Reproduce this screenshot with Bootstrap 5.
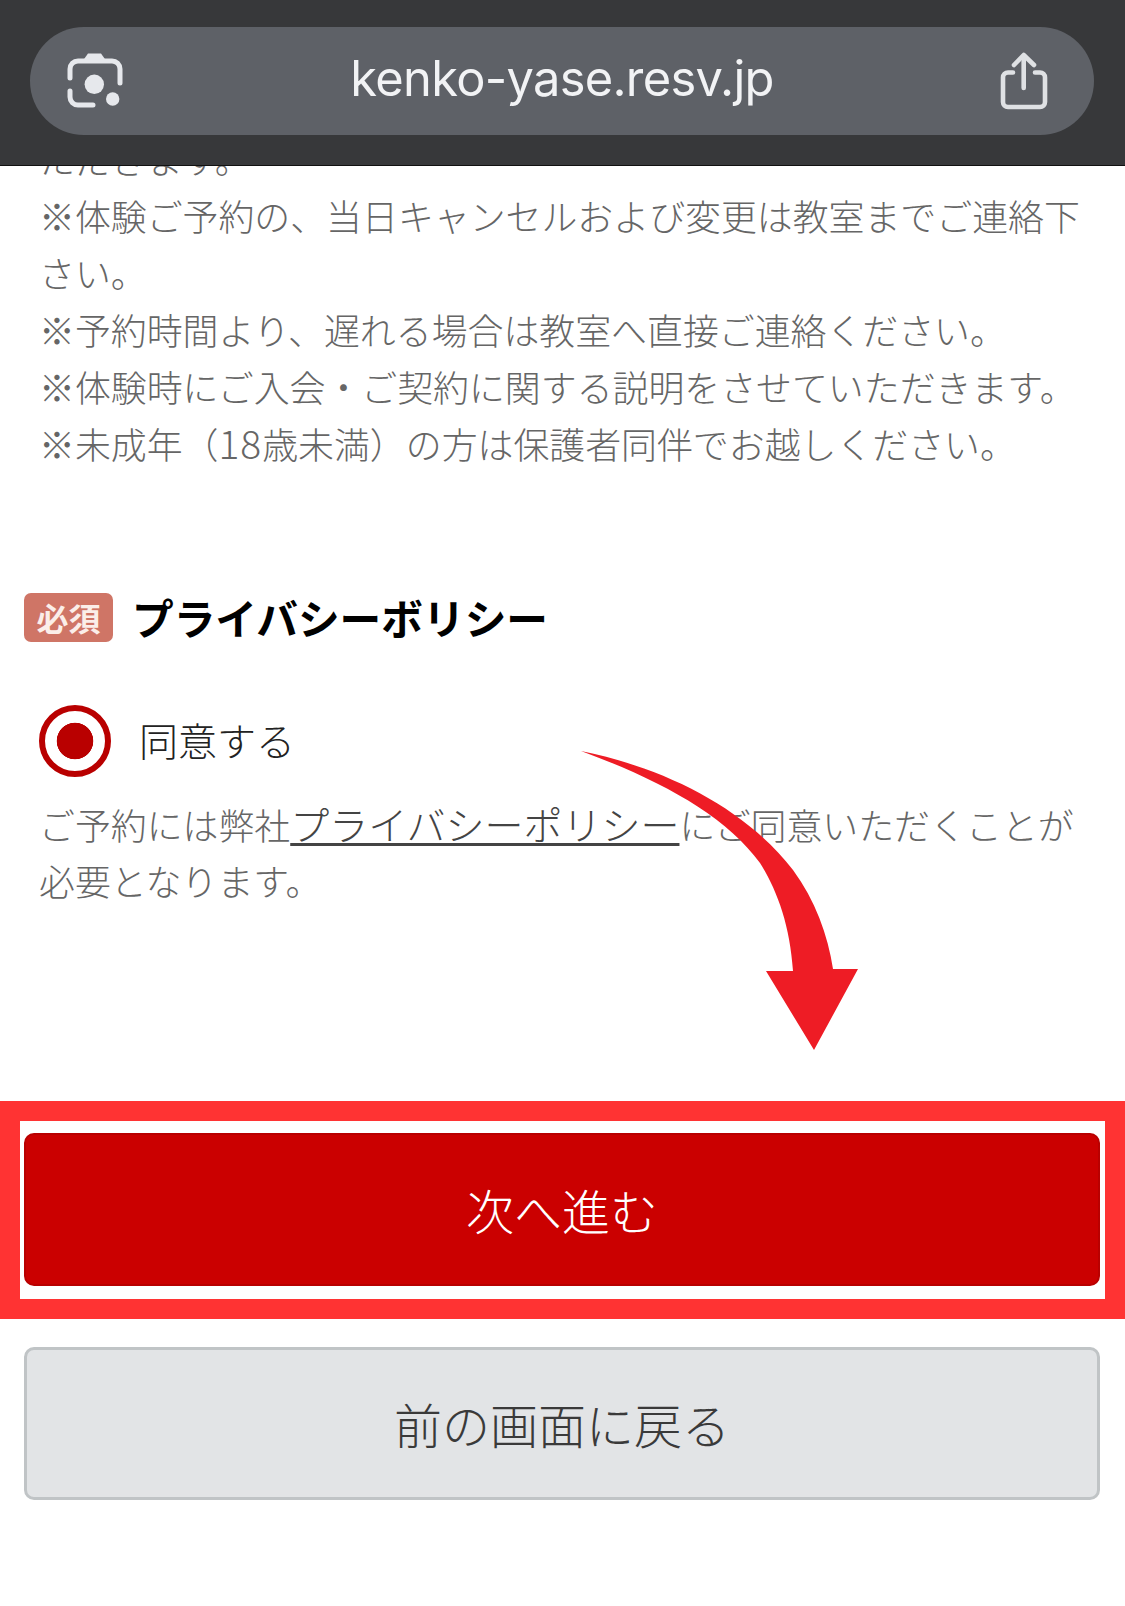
<!DOCTYPE html>
<html lang="ja">
<head>
<meta charset="utf-8">
<title>kenko-yase.resv.jp</title>
<link rel="stylesheet" href="https://cdn.jsdelivr.net/npm/bootstrap@5.3.0/dist/css/bootstrap.min.css">
<style>
html,body{background:#fff;}
body{width:1125px;height:1606px;overflow:hidden;font-family:"Noto Sans CJK JP","Liberation Sans",sans-serif;font-weight:300;position:relative;}
.top-chrome{height:166px;background:#37383a;border-bottom:1px solid #111;padding:27px 31px 0 30px;}
.url-pill{height:108px;background:#5e6167;border-radius:54px;padding:0 43px 0 29px;}
.url-text{font-family:Inter,"Liberation Sans",sans-serif;font-weight:400;font-size:48.8px;letter-spacing:-.7px;color:#f2f3f5;line-height:1;}
.page-main{padding-top:129.5px;}
.notes{padding:0 43px 0 39px;font-size:35.9px;line-height:57.1px;color:#666;}
.notes p{margin:0;}
.num-wide{font-size:39px;letter-spacing:1px;line-height:1;}
.title-row{margin:120.9px 0 0 24px;}
.req-tag{width:89px;height:49px;background:#cf7566;color:#fbeee9;font-size:32px;font-weight:700;border-radius:7px;line-height:1;}
.title-text{font-size:41.7px;font-weight:700;color:#000;margin-left:19px;line-height:1;}
.agree-row{margin:63px 0 0 39px;}
.agree-row .form-check-input.rad-mark{width:72px;height:72px;margin:0;flex:none;border:6.5px solid #b90000;background:radial-gradient(circle,#b90000 18px,#fff 18.6px);box-shadow:none;}
.agree-label{font-size:39px;color:#222;margin:-2px 0 0 28px;line-height:1;}
.consent{padding:19px 43px 0 39px;font-size:35.9px;line-height:56.5px;color:#666;margin:0;}
.consent a{font-size:39px;color:#444;line-height:1;text-decoration:underline;text-decoration-thickness:3px;text-underline-offset:3px;text-decoration-skip-ink:none;}
.callout{margin-top:192px;border:20px solid #f33;padding:12px 5px 13px 4px;background:#fff;}
.go-btn{height:153px;background:#cb0000;border:2px solid #b90000;border-radius:10px;color:#fff;font-size:48px;font-weight:300;}
.back-wrap{padding:28px 25px 0 24px;}
.back-btn{height:153px;background:#e2e4e6;border:3px solid #c0c4c6;border-radius:10px;color:#3a3a3a;font-size:48px;font-weight:300;}
.swoop{position:absolute;left:570px;top:740px;width:300px;height:320px;pointer-events:none;}
</style>
</head>
<body>
<header class="top-chrome fixed-top">
  <div class="url-pill d-flex align-items-center">
    <svg width="70" height="70" viewBox="60 46 70 70" aria-hidden="true">
      <g fill="none" stroke="#e6e8ec" stroke-width="5" stroke-linecap="round">
        <path d="M71 78V69a8 8 0 0 1 8-8H113a8 8 0 0 1 8 8V83"/>
        <path d="M71 91V97a8 8 0 0 0 8 8H94"/>
      </g>
      <g fill="#e6e8ec">
        <path d="M83 62L89 53.5H102L108 62Z"/>
        <circle cx="95.3" cy="84.3" r="9.7"/>
        <circle cx="113.7" cy="99" r="6.7"/>
      </g>
    </svg>
    <div class="url-text flex-grow-1 text-center mb-1">kenko-yase.resv.jp</div>
    <svg width="56" height="64" viewBox="996 49 56 64" aria-hidden="true">
      <g fill="none" stroke="#dfe1e4" stroke-width="4.6" stroke-linecap="round" stroke-linejoin="round">
        <path d="M1014 72.5H1009a5 5 0 0 0-5 5V102a5 5 0 0 0 5 5H1041a5 5 0 0 0 5-5V77.5a5 5 0 0 0-5-5H1036"/>
        <path d="M1024.7 88V56"/>
        <path d="M1015 65L1024.7 55L1035 65"/>
      </g>
    </svg>
  </div>
</header>
<main class="page-main">
  <section class="notes">
    <p>ただきます。</p>
    <p>※体験ご予約の、当日キャンセルおよび変更は教室までご連絡下さい。</p>
    <p>※予約時間より、遅れる場合は教室へ直接ご連絡ください。</p>
    <p>※体験時にご入会・ご契約に関する説明をさせていただきます。</p>
    <p>※未成年（<span class="num-wide">18</span>歳未満）の方は保護者同伴でお越しください。</p>
  </section>
  <div class="title-row d-flex align-items-center">
    <span class="req-tag d-flex align-items-center justify-content-center">必須</span>
    <span class="title-text">プライバシーボリシー</span>
  </div>
  <div class="agree-row d-flex align-items-center">
    <input class="form-check-input rad-mark" type="radio" id="agree" checked>
    <label class="agree-label" for="agree">同意する</label>
  </div>
  <p class="consent">ご予約には弊社<a href="#">プライバシーポリシー</a>にご同意いただくことが必要となります。</p>
  <div class="callout">
    <button type="button" class="btn go-btn w-100 d-block">次へ進む</button>
  </div>
  <div class="back-wrap">
    <button type="button" class="btn back-btn w-100 d-block">前の画面に戻る</button>
  </div>
</main>
<svg class="swoop" viewBox="570 740 300 320" aria-hidden="true">
  <path fill="#ee1c25" d="M581 751C665 768 745 808 793 870C815 900 828 935 833 969L858 969L814 1050L766 971L793 971C790 925 777 890 760 863C725 815 660 780 581 751Z"/>
</svg>
<script src="https://cdn.jsdelivr.net/npm/bootstrap@5.3.0/dist/js/bootstrap.bundle.min.js"></script>
</body>
</html>
